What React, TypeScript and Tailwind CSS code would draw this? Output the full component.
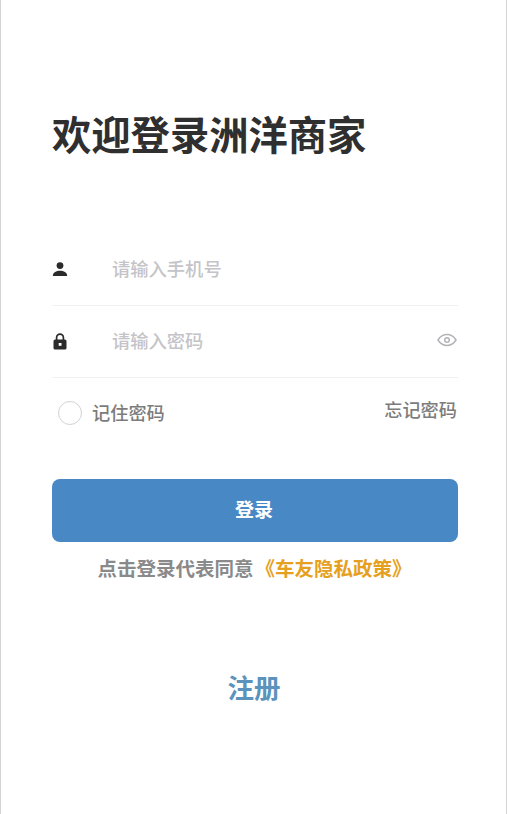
const FONT = "font-['Noto_Sans_CJK_SC',sans-serif]";

function UserIcon() {
  return (
    <svg width="16" height="16" viewBox="0 0 16 16" fill="#2b2b2b">
      <circle cx="8" cy="4.600" r="3.400" />
      <path d="M0.800 15c0-3.600 3.600-5.200 7.200-5.200s7.200 1.600 7.200 5.200z" />
    </svg>
  );
}

function LockIcon() {
  return (
    <svg width="14" height="17" viewBox="0 0 14 17">
      <path d="M3.600 7V4.600a3.400 3.400 0 0 1 6.800 0V7" fill="none" stroke="#2b2b2b" strokeWidth="1.700" />
      <rect x="0.500" y="6.400" width="13" height="10.200" rx="1.600" fill="#2b2b2b" />
      <rect x="5.700" y="10" width="2.800" height="2.800" fill="#fff" />
    </svg>
  );
}

function EyeIcon() {
  return (
    <svg width="20" height="14" viewBox="0 0 20 14" fill="none" stroke="#b4b4b8" strokeWidth="1.500">
      <path d="M1 7c2.200-3.600 5.200-5.400 9-5.400s6.800 1.800 9 5.400c-2.200 3.600-5.200 5.400-9 5.400S3.200 10.600 1 7z" />
      <circle cx="10" cy="7" r="2.300" />
    </svg>
  );
}

export default function App() {
  return (
    <div className={`${FONT} w-[507px] h-[814px] bg-white border-x border-[#d4d4d4] overflow-hidden`}>
      <div className="pl-[51px] pr-[48px]">
        <h1 className="pt-[107px] text-[39.300px] leading-[52px] font-bold text-[#2f2f2f] whitespace-nowrap">欢迎登录洲洋商家</h1>

        <div className="mt-[75px] h-[72px] flex items-center border-b border-[#f1f1f1]">
          <div className="w-[60px] shrink-0 -mt-[1px]"><UserIcon /></div>
          <span className="-mt-[2px] text-[18.300px] font-medium text-[#c4c4c8]">请输入手机号</span>
        </div>

        <div className="h-[72px] flex items-center border-b border-[#f1f1f1]">
          <div className="w-[60px] shrink-0 pl-[1px] flex"><LockIcon /></div>
          <span className="-mt-[2px] text-[18.300px] font-medium text-[#c4c4c8]">请输入密码</span>
          <div className="ml-auto mr-[1px] -mt-[3px] flex"><EyeIcon /></div>
        </div>

        <div className="mt-[23px] flex items-start justify-between">
          <div className="flex items-center pl-[6px]">
            <span className="w-[24px] h-[24px] rounded-full border border-[#d2d2d2] bg-white" />
            <span className="ml-[10px] -mt-[3px] text-[18.200px] leading-[24px] font-medium text-[#7c7c7c]">记住密码</span>
          </div>
          <span className="mr-[1px] -mt-[4px] text-[18.200px] leading-[24px] font-medium text-[#7c7c7c]">忘记密码</span>
        </div>

        <button className="mt-[54px] w-full h-[63px] rounded-[8px] bg-[#4888c5] text-white text-[19px] font-bold flex items-center justify-center pr-[2px] pb-[2px]">登录</button>

        <p className="mt-[11px] pr-[1px] text-center text-[19.500px] leading-[30px] font-bold text-[#8a8a8a] whitespace-nowrap">
          点击登录代表同意<span className="ml-[2px] text-[#e6a020]">《车友隐私政策》</span>
        </p>

        <p className="mt-[86px] pr-[2px] text-center text-[26.500px] leading-[36px] font-bold text-[#5b93bd]">注册</p>
      </div>
    </div>
  );
}
